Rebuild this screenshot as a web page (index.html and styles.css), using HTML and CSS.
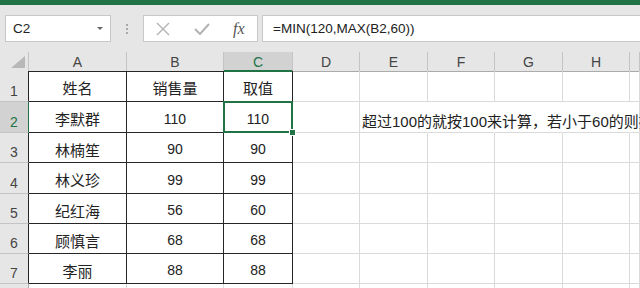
FILE: index.html
```html
<!DOCTYPE html>
<html lang="zh-CN">

<head>
  <meta charset="UTF-8">
  <title>取值 - Excel</title>
  <link rel="stylesheet" href="styles.css">
</head>

<body>

  <div class="titlebar"></div>

  <!-- Name box + formula bar -->
  <div class="toolbar">
    <div class="namebox">
      <span>C2</span>
      <span class="caret"></span>
    </div>
    <div class="grip"><i></i><i></i><i></i></div>
    <div class="fxbox">
      <svg class="icon" width="14" height="14" viewBox="0 0 14 14">
        <path d="M1 1 L13 13 M13 1 L1 13" stroke="#b3b3b3" stroke-width="1.4" fill="none"/>
      </svg>
      <svg class="icon" width="16" height="12" viewBox="0 0 16 12">
        <path d="M1 6 L6 11 L15 1" stroke="#b3b3b3" stroke-width="2" fill="none"/>
      </svg>
      <span class="fx">fx</span>
    </div>
    <div class="formula">=MIN(120,MAX(B2,60))</div>
  </div>

  <!-- Sheet grid -->
  <div class="sheet">
    <div class="row head">
      <div class="corner">
        <svg width="14" height="12" viewBox="0 0 14 12"><polygon points="14,0 14,12 0,12" fill="#b8b8b8"/></svg>
      </div>
      <div class="top">A</div>
      <div class="top">B</div>
      <div class="top active">C</div>
      <div>D</div>
      <div>E</div>
      <div>F</div>
      <div>G</div>
      <div>H</div>
      <div></div>
    </div>

    <div class="row tall">
      <div class="rh edge">1</div>
      <div class="t">姓名</div>
      <div class="t">销售量</div>
      <div class="t">取值</div>
      <div></div><div></div><div></div><div></div><div></div><div></div>
    </div>

    <div class="row tall">
      <div class="rh edge sel">2</div>
      <div class="t">李默群</div>
      <div class="t num">110</div>
      <div class="t num current">110</div>
      <div></div>
      <div class="note">超过100的就按100来计算，若小于60的则按60来计算</div>
      <div class="spill"></div><div class="spill"></div><div class="spill"></div><div></div>
    </div>

    <div class="row">
      <div class="rh edge">3</div>
      <div class="t">林楠笙</div>
      <div class="t num">90</div>
      <div class="t num">90</div>
      <div></div><div></div><div></div><div></div><div></div><div></div>
    </div>

    <div class="row tall">
      <div class="rh edge">4</div>
      <div class="t">林义珍</div>
      <div class="t num">99</div>
      <div class="t num">99</div>
      <div></div><div></div><div></div><div></div><div></div><div></div>
    </div>

    <div class="row">
      <div class="rh edge">5</div>
      <div class="t">纪红海</div>
      <div class="t num">56</div>
      <div class="t num">60</div>
      <div></div><div></div><div></div><div></div><div></div><div></div>
    </div>

    <div class="row">
      <div class="rh edge">6</div>
      <div class="t">顾慎言</div>
      <div class="t num">68</div>
      <div class="t num">68</div>
      <div></div><div></div><div></div><div></div><div></div><div></div>
    </div>

    <div class="row">
      <div class="rh edge">7</div>
      <div class="t">李丽</div>
      <div class="t num">88</div>
      <div class="t num">88</div>
      <div></div><div></div><div></div><div></div><div></div><div></div>
    </div>

    <!-- only the top of row 8 is in view -->
    <div class="row last">
      <div class="rh"></div>
      <div></div><div></div><div></div><div></div><div></div><div></div><div></div><div></div><div></div>
    </div>
  </div>

</body>

</html>
```

FILE: styles.css
```css
/* Excel window */

body {
  margin: 0;
  width: 640px;
  height: 288px;
  overflow: hidden;
  background: #fff;
  font-family: "Liberation Sans", "Noto Sans CJK SC", sans-serif;
  color: #222;
}

.titlebar {
  height: 5px;
  background: #217346;
}

/* Formula bar */
.toolbar {
  height: 47px;
  box-sizing: border-box;
  padding-top: 10px;
  background: #e6e6e6;
  display: flex;
  align-items: flex-start;
}

.namebox,
.fxbox,
.formula {
  height: 27px;
  box-sizing: border-box;
  background: #fff;
  border: 1px solid #c8c8c8;
  display: flex;
  align-items: center;
}

.namebox {
  margin-left: 5px;
  width: 106px;
  padding: 0 7px 0 7px;
  justify-content: space-between;
  font-size: 13.5px;
}

.caret {
  width: 0;
  height: 0;
  border-left: 3px solid transparent;
  border-right: 3px solid transparent;
  border-top: 3px solid #666;
}

.grip {
  width: 32px;
  height: 27px;
  display: flex;
  flex-direction: column;
  align-items: center;
  justify-content: center;
  gap: 2px;
}

.grip i {
  width: 2px;
  height: 2px;
  background: #a8a8a8;
}

.fxbox {
  width: 115px;
  padding-left: 12px;
}

.fxbox .icon {
  margin-right: 24px;
}

.fxbox .icon + .icon {
  margin-right: 23px;
}

.fx {
  font-family: "Liberation Serif", serif;
  font-style: italic;
  font-size: 16px;
  color: #555;
}

.formula {
  flex: 1;
  margin-left: 4px;
  border-right: none;
  padding-left: 10px;
  font-size: 13.5px;
}

/* Sheet */
.sheet {
  width: 640px;
  overflow: hidden;
}

.row {
  display: grid;
  grid-template-columns: 29px 98px 97px 69px 67px 68px 67px 68px 67px 1fr;
  height: 30px;
}

.row.tall {
  height: 31px;
}

.row.last {
  height: 4px;
}

.row > div {
  box-sizing: border-box;
  border-right: 1px solid #dadada;
  border-bottom: 1px solid #dadada;
  display: flex;
  align-items: center;
  justify-content: center;
  font-size: 15px;
  padding-top: 3px;
}

.row.last > div {
  border-bottom: none;
  padding: 0;
}

.row.head {
  height: 19px;
}

.row.head > div {
  background: #e6e6e6;
  border-right-color: #c4c4c4;
  border-bottom-color: #ababab;
  font-size: 14px;
  color: #444;
  padding-top: 0;
}

.row.head > .top {
  border-bottom-color: #262626;
}

.row.head > .active {
  background: #d2d2d2;
  color: #217346;
  border-bottom: 2px solid #217346;
  padding-top: 2px;
}

.row.head > .corner {
  align-items: flex-end;
  justify-content: flex-end;
  padding: 0 3px 3px 0;
}

.row > .rh {
  background: #e6e6e6;
  border-right-color: #ababab;
  border-bottom-color: #c4c4c4;
  align-items: flex-end;
  font-size: 14px;
  color: #444;
  padding: 0 0 2px 0;
}

.row > .rh.edge {
  border-right-color: #262626;
}

.row > .rh.sel {
  background: #d2d2d2;
  color: #217346;
  border-right-color: #217346;
}

.row > .t {
  border-right-color: #262626;
  border-bottom-color: #262626;
  color: #222;
}

.row > .num {
  font-size: 14px;
}

.row > .current {
  position: relative;
}

/* Selection outline + fill handle */
.current::after {
  content: "";
  position: absolute;
  top: -1px;
  left: -1px;
  right: -1px;
  bottom: -1px;
  border: 2px solid #217346;
}

.current::before {
  content: "";
  position: absolute;
  right: -4px;
  bottom: -4px;
  width: 5px;
  height: 5px;
  background: #217346;
  border: 1px solid #fff;
  z-index: 2;
}

.row > .note {
  justify-content: flex-start;
  align-items: flex-end;
  padding: 0 0 1px 2px;
  white-space: nowrap;
  overflow: visible;
  border-right-color: transparent;
  position: relative;
  z-index: 1;
}

.row > .spill {
  border-right-color: transparent;
}
```
